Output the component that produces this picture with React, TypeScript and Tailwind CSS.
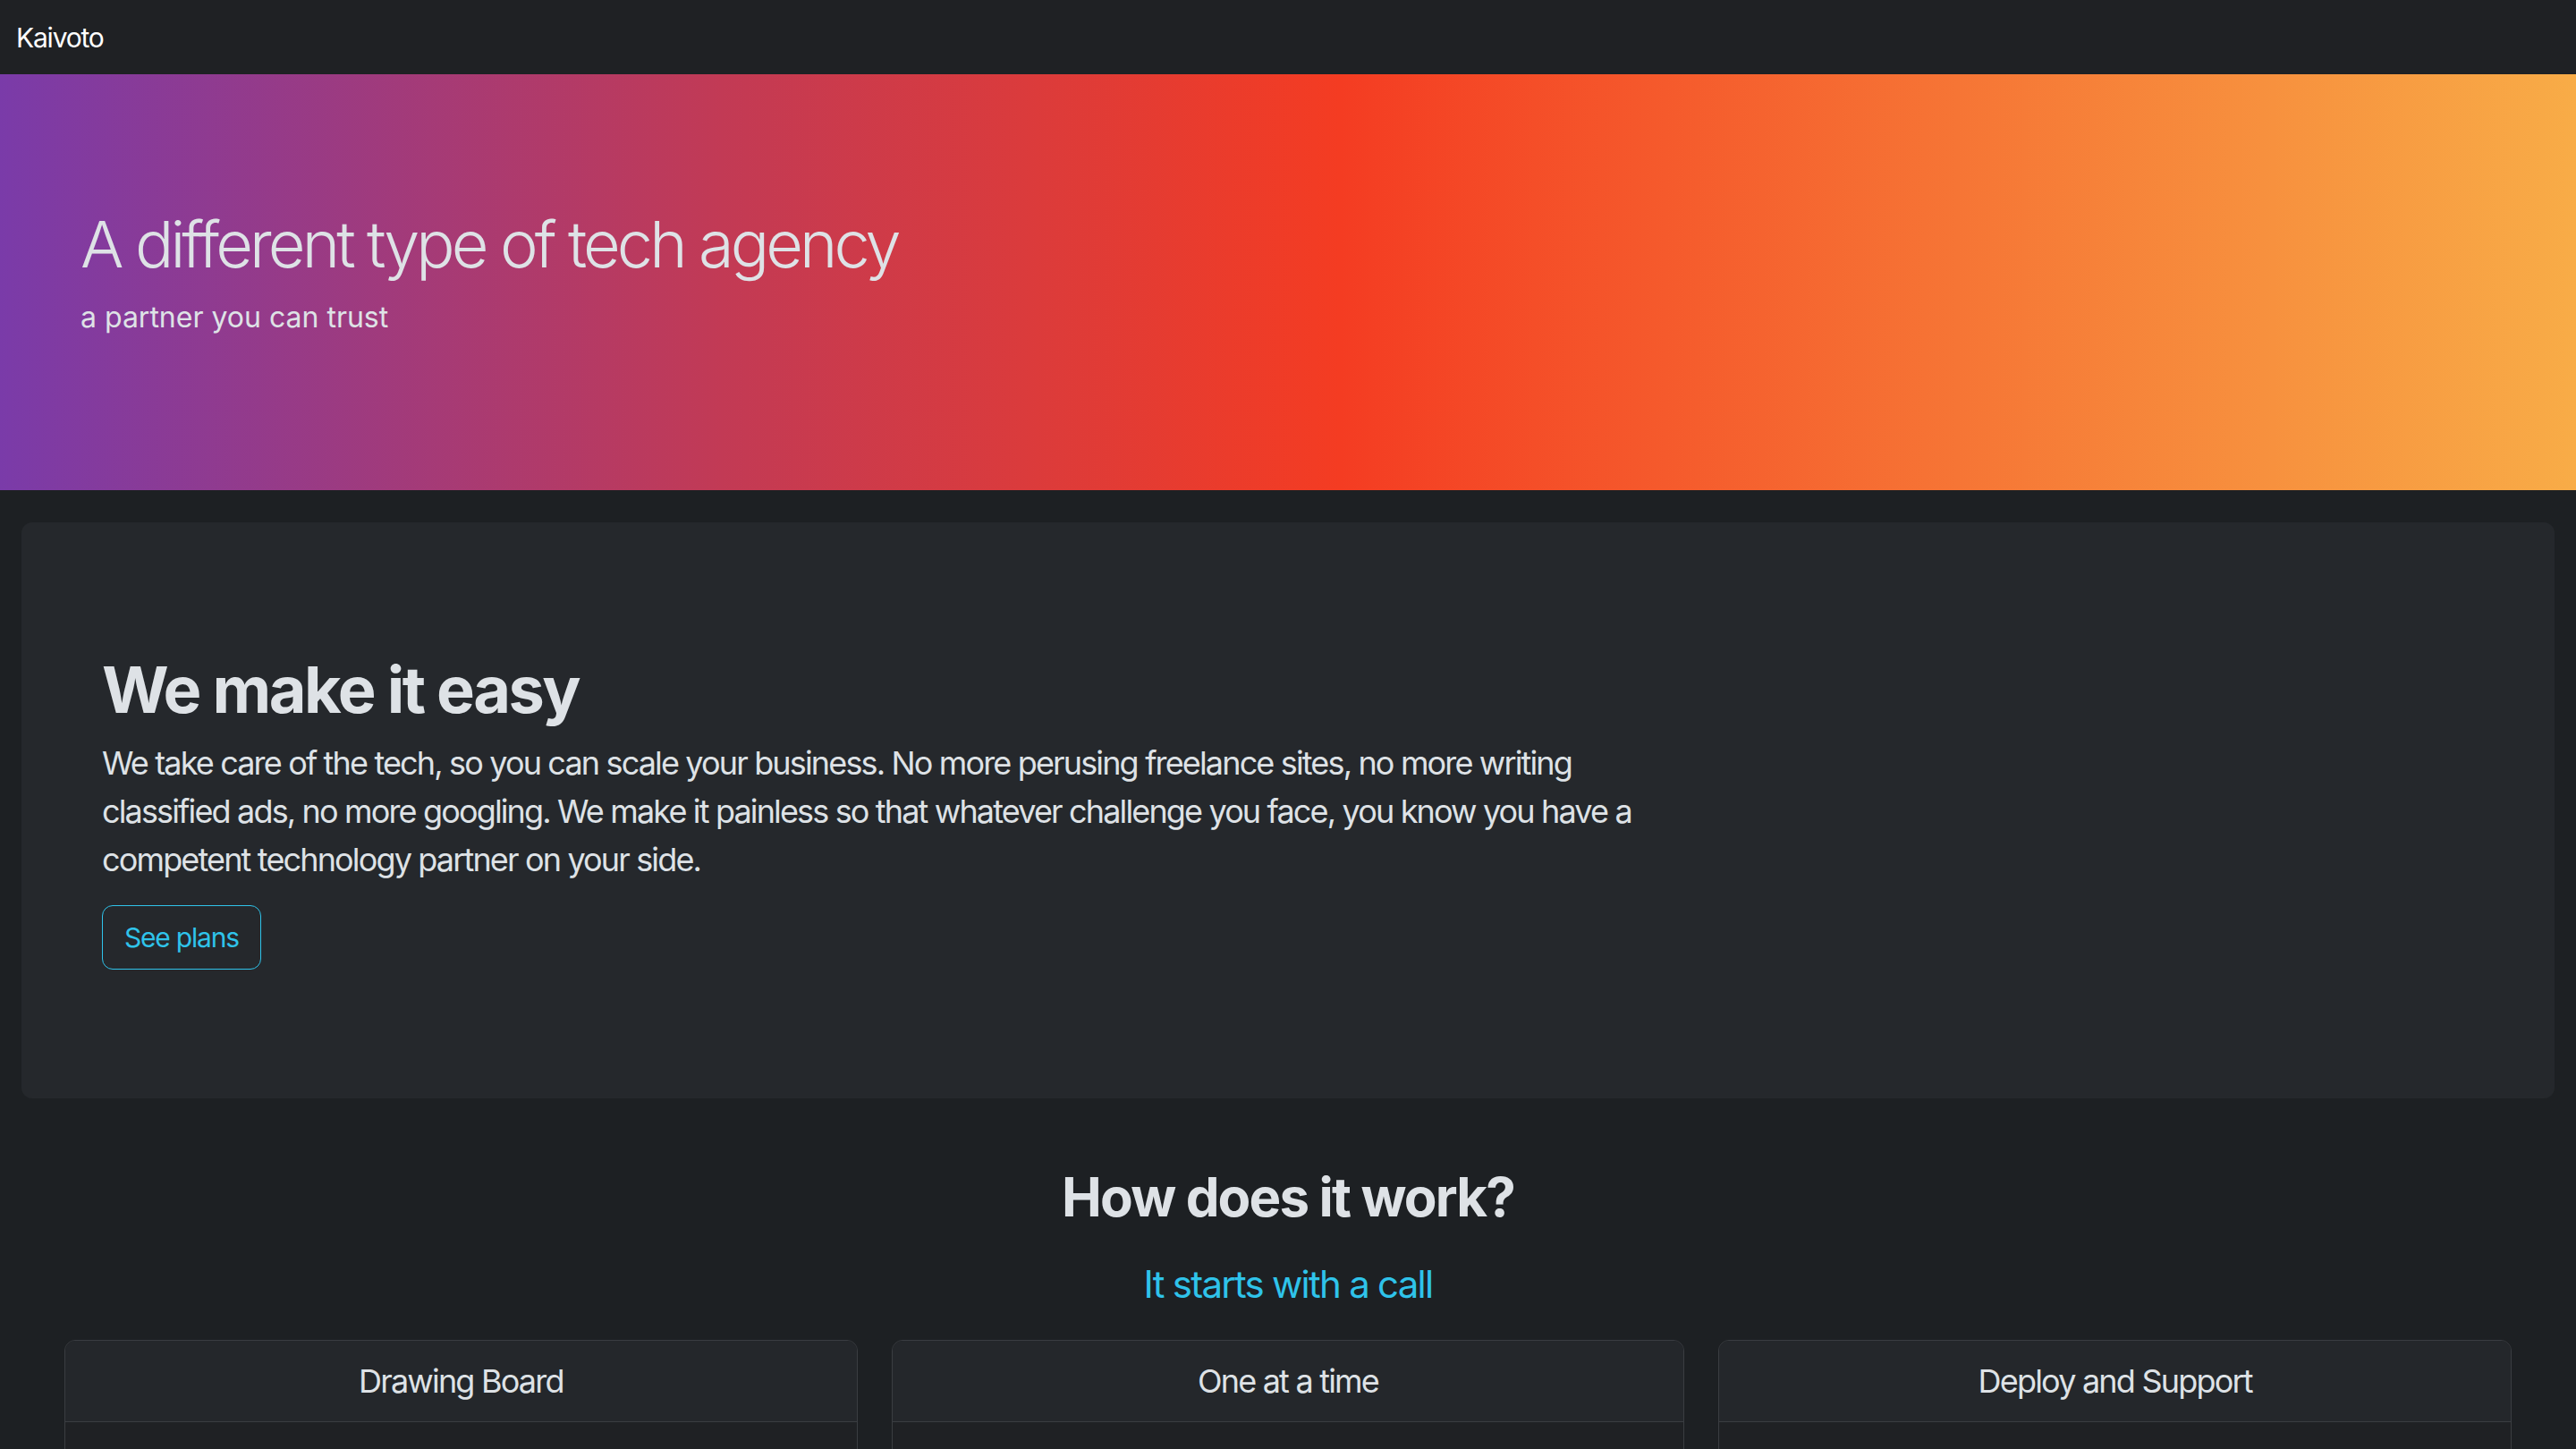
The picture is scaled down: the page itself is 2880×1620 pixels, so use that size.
const steps = ["Drawing Board", "One at a time", "Deploy and Support"];

export default function App() {
  return (
    <div className="min-h-screen bg-[#1d2023] font-['Inter','Noto_Sans',sans-serif] text-[#dee2e6]">
      {/* Navbar */}
      <nav className="flex h-[83px] items-center bg-[#1f2124] px-[18px]">
        <span className="text-[30px] leading-none tracking-[-1.2px] text-white">Kaivoto</span>
      </nav>

      {/* Hero */}
      <header className="flex h-[465px] flex-col justify-center bg-[linear-gradient(to_right,#7a3ba9_0%,#c23a55_28%,#f43c22_52%,#f67535_76%,#f8ac47_100%)] px-[90px] pb-[22px]">
        <h1 className="mb-[14px] text-[72px] font-light leading-[1.2] tracking-[-3.9px] text-[#dee2e6]">
          A different type of tech agency
        </h1>
        <p className="text-[32px] leading-[1.5] tracking-[0px] text-[#dee2e6]">a partner you can trust</p>
      </header>

      {/* Intro card */}
      <section className="mx-[24px] my-[36px] rounded-[12px] bg-[#25282c] p-[72px]">
        <div className="px-[18px] py-[72px]">
          <div className="w-[1756px]">
            <h2 className="mb-[12px] text-[72px] font-bold leading-[1.2] tracking-[-2.5px] text-[#dee2e6]">
              We make it easy
            </h2>
            <p className="mb-[24px] text-[36px] leading-[1.5] tracking-[-1.85px] text-[#dee2e6]">
              We take care of the tech, so you can scale your business. No more perusing freelance sites, no more
              writing classified ads, no more googling. We make it painless so that whatever challenge you face, you
              know you have a competent technology partner on your side.
            </p>
            <button className="h-[72px] rounded-[12px] border-[1.5px] border-[#2fc3ea] px-[24px] text-[30px] leading-[1.5] tracking-[-1.2px] text-[#2fc3ea]">
              See plans
            </button>
          </div>
        </div>
      </section>

      {/* How it works */}
      <section className="pt-[38px] text-center">
        <h2 className="text-[60px] font-bold leading-[1.2] tracking-[-1.85px] text-[#dee2e6]">How does it work?</h2>
        <h3 className="mt-[37px] text-[42px] leading-[1.2] tracking-[-1.75px] text-[#2fc3ea]">It starts with a call</h3>
        <div className="mt-[36px] grid grid-cols-3 gap-[38px] px-[72px]">
          {steps.map((s) => (
            <div key={s} className="overflow-hidden rounded-[12px] border-[1.5px] border-[#3a3d41] bg-[#1f2124]">
              <div className="flex h-[91px] items-center justify-center border-b-[1.5px] border-[#3a3d41] bg-[#24272b]">
                <span className="text-[36px] leading-[1.5] tracking-[-1.8px] text-[#dee2e6]">{s}</span>
              </div>
              <div className="h-[320px]" />
            </div>
          ))}
        </div>
      </section>
    </div>
  );
}
